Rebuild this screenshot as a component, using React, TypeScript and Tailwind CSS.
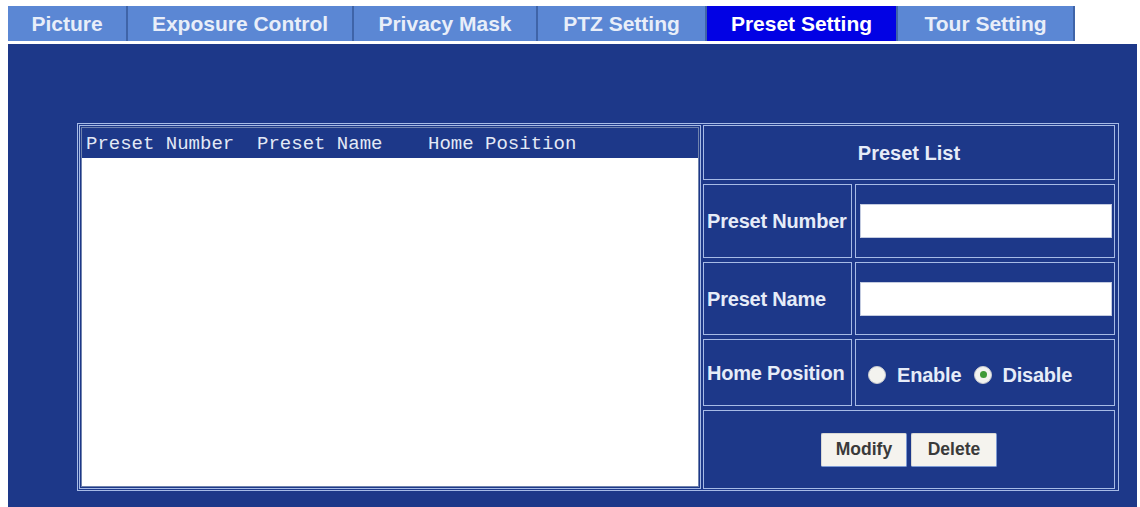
import React from "react";

const tabs = [
  { label: "Picture", w: "w-[120px]" },
  { label: "Exposure Control", w: "w-[226px]" },
  { label: "Privacy Mask", w: "w-[184px]" },
  { label: "PTZ Setting", w: "w-[169px]" },
  { label: "Preset Setting", w: "w-[191px]", active: true },
  { label: "Tour Setting", w: "w-[177px]" },
];

const sans = { fontFamily: '"Liberation Sans", Arial, sans-serif' };
const mono = { fontFamily: '"Liberation Mono", "Courier New", monospace' };

function Radio({ checked }: { checked?: boolean }) {
  return (
    <span className="flex h-[18px] w-[18px] items-center justify-center rounded-full border border-[#c9cbd0] bg-[#f3f3ef]">
      {checked && <span className="h-[7px] w-[7px] rounded-full bg-[#3f9a36]" />}
    </span>
  );
}

function Btn({ children }: { children: React.ReactNode }) {
  return (
    <button className="h-[34px] w-[86px] rounded-[2px] border border-[#d8d8d4] border-b-[#7d9ad4] border-r-[#7d9ad4] bg-[#f5f3ee] text-[17.5px] font-bold text-[#3a3a3a]">
      {children}
    </button>
  );
}

export default function App() {
  return (
    <div className="flex h-[507px] w-[1140px] flex-col overflow-hidden bg-white" style={sans}>
      {/* tab strip */}
      <div className="ml-[8px] mt-[6px] flex h-[35px]">
        {tabs.map((t) => (
          <div
            key={t.label}
            className={`${t.w} flex items-center justify-center border-r-2 text-[21px] font-bold ${
              t.active
                ? "border-r-[#3f64a8] bg-[#0202e4] text-white"
                : "border-r-[#3f64a8] bg-[#5b87d4] text-[#e8eef9]"
            }`}
          >
            {t.label}
          </div>
        ))}
      </div>

      {/* settings panel */}
      <div className="ml-[8px] mt-[3px] w-[1129px] flex-1 bg-[#1d3889] pl-[69px] pt-[79px]">
        <div className="flex h-[368px] w-[1042px] gap-[2px] border border-[#a7bbe6] p-[1px]">
          {/* preset list box */}
          <div className="flex w-[622px] border border-[#a7bbe6] p-[1px]">
            <div className="flex flex-1 flex-col border border-[#7083ad]">
              <div
                className="h-[30px] bg-[#1d3889] pl-[4px] pt-[5px] text-[19px] leading-[22px] whitespace-pre text-[#e3e9f6]"
                style={mono}
              >
                {"Preset Number  Preset Name    Home Position"}
              </div>
              <div className="flex-1 bg-white" />
            </div>
          </div>

          {/* preset form */}
          <div className="flex w-[412px] flex-col gap-[4px] text-[20px] font-bold tracking-[-0.2px] text-[#e6ecf8]">
            <div className="flex h-[55px] items-center justify-center border border-[#a7bbe6] tracking-normal">
              Preset List
            </div>
            <div className="flex h-[74px] gap-[3px]">
              <div className="flex w-[149px] items-center border border-[#a7bbe6] pl-[3px]">
                Preset Number
              </div>
              <div className="flex flex-1 items-center border border-[#a7bbe6] pl-[4px] pr-[2px]">
                <div className="h-[34px] w-full border border-[#c3cbe0] bg-white" />
              </div>
            </div>
            <div className="flex h-[73px] gap-[3px]">
              <div className="flex w-[149px] items-center border border-[#a7bbe6] pl-[3px]">
                Preset Name
              </div>
              <div className="flex flex-1 items-center border border-[#a7bbe6] pl-[4px] pr-[2px]">
                <div className="h-[34px] w-full border border-[#c3cbe0] bg-white" />
              </div>
            </div>
            <div className="flex h-[67px] gap-[3px]">
              <div className="flex w-[149px] items-center border border-[#a7bbe6] pl-[3px]">
                Home Position
              </div>
              <div className="flex flex-1 items-center border border-[#a7bbe6] pl-[12px] pt-[4px]">
                <Radio />
                <span className="ml-[11px]">Enable</span>
                <span className="ml-[13px]">
                  <Radio checked />
                </span>
                <span className="ml-[10px]">Disable</span>
              </div>
            </div>
            <div className="flex flex-1 items-center justify-center gap-[4px] border border-[#a7bbe6] tracking-normal">
              <Btn>Modify</Btn>
              <Btn>Delete</Btn>
            </div>
          </div>
        </div>
      </div>
    </div>
  );
}
